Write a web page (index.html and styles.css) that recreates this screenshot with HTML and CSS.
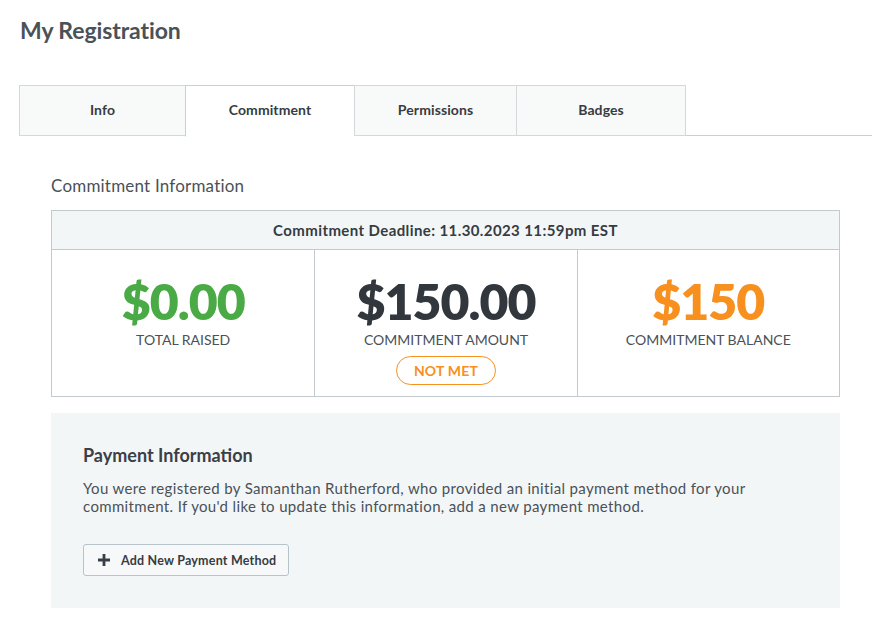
FILE: index.html
```html
<!DOCTYPE html>
<html lang="en">
<head>
<meta charset="utf-8">
<title>My Registration</title>
<link rel="stylesheet" href="styles.css">
</head>
<body>
<main class="page">
  <h1 class="title">My Registration</h1>
  <nav class="tabs">
    <div class="tab tab-info">Info</div>
    <div class="tab tab-commitment active">Commitment</div>
    <div class="tab tab-permissions">Permissions</div>
    <div class="tab tab-badges">Badges</div>
  </nav>
  <section class="content">
    <h2 class="section-title">Commitment Information</h2>
    <div class="summary">
      <div class="summary-head">Commitment Deadline: 11.30.2023 11:59pm EST</div>
      <div class="summary-cols">
        <div class="stat">
          <div class="amount green">$0.00</div>
          <div class="label">TOTAL RAISED</div>
        </div>
        <div class="stat">
          <div class="amount dark">$150.00</div>
          <div class="label">COMMITMENT AMOUNT</div>
          <span class="badge">NOT MET</span>
        </div>
        <div class="stat">
          <div class="amount orange">$150</div>
          <div class="label">COMMITMENT BALANCE</div>
        </div>
      </div>
    </div>
    <div class="payment">
      <h3 class="payment-title">Payment Information</h3>
      <p class="payment-text">You were registered by Samanthan Rutherford, who provided an initial payment method for your commitment. If you'd like to update this information, add a new payment method.</p>
      <button class="add-btn" type="button">
        <svg class="plus" width="12" height="12" viewBox="0 0 12 12" aria-hidden="true"><path d="M4.6 0h2.8v4.6H12v2.8H7.4V12H4.6V7.4H0V4.6h4.6z" fill="#3a4047"/></svg>
        <span class="btn-label">Add New Payment Method</span>
      </button>
    </div>
  </section>
</main>
</body>
</html>
```

FILE: styles.css
```css
* { box-sizing: border-box; }

html, body {
  margin: 0;
  padding: 0;
  background: #ffffff;
}

body {
  font-family: Lato, "Open Sans", "Liberation Sans", sans-serif;
  color: #474e55;
}

.page {
  width: 880px;
  padding: 16px 8px 0 19px;
}

.title {
  margin: 0 0 0 1px;
  font-size: 23px;
  line-height: 29px;
  font-weight: 700;
  letter-spacing: -0.1px;
  color: #4a5258;
}

.tabs {
  display: flex;
  margin-top: 40px;
  height: 51px;
  border-bottom: 1px solid #c9cfd4;
}

.tab {
  height: 51px;
  display: flex;
  align-items: center;
  justify-content: center;
  padding-bottom: 2px;
  background: #f8f9f9;
  border: 1px solid #d3d8dc;
  border-right: none;
  font-size: 14px;
  font-weight: 700;
  letter-spacing: 0.1px;
  color: #363c42;
}

.tab-info { width: 166px; }
.tab-commitment { width: 169px; }
.tab-permissions { width: 162px; }
.tab-badges { width: 170px; border-right: 1px solid #d3d8dc; }

.tab.active {
  background: #ffffff;
  border-color: #c9cfd4;
  border-bottom: 1px solid #ffffff;
  margin-bottom: -1px;
  height: 52px;
  padding-bottom: 3px;
}

.content {
  padding: 0 32px;
}

.section-title {
  margin: 40px 0 0;
  font-size: 17px;
  line-height: 20px;
  font-weight: 400;
  letter-spacing: 0.2px;
  color: #4a5157;
}

.summary {
  margin-top: 14px;
  border: 1px solid #c3cacf;
}

.summary-head {
  height: 39px;
  display: flex;
  align-items: center;
  justify-content: center;
  background: #f3f6f7;
  border-bottom: 1px solid #c3cacf;
  font-size: 15px;
  font-weight: 700;
  letter-spacing: 0.4px;
  color: #363c42;
}

.summary-cols {
  display: grid;
  grid-template-columns: 1fr 1fr 1fr;
  height: 146px;
}

.stat {
  display: flex;
  flex-direction: column;
  align-items: center;
  padding-top: 29px;
}

.stat + .stat {
  border-left: 1px solid #c3cacf;
}

.amount {
  font-size: 50px;
  line-height: 44px;
  font-weight: 800;
  letter-spacing: -1px;
}

.green { color: #4aab46; }
.dark { color: #31373d; }
.orange { color: #f7901e; }

.label {
  margin-top: 8px;
  font-size: 14px;
  line-height: 17px;
  color: #4a5157;
}

.badge {
  margin-top: 8px;
  width: 100px;
  height: 29px;
  display: flex;
  align-items: center;
  justify-content: center;
  border: 1px solid #f7901e;
  border-radius: 15px;
  font-size: 14px;
  font-weight: 700;
  letter-spacing: 0.2px;
  color: #f7901e;
}

.payment {
  margin-top: 16px;
  background: #f3f6f7;
  padding: 31px 32px 32px;
}

.payment-title {
  margin: 0;
  font-size: 18px;
  line-height: 22px;
  font-weight: 700;
  color: #3a4046;
}

.payment-text {
  margin: 13px 0 0;
  font-size: 15px;
  line-height: 18px;
  letter-spacing: 0.35px;
  color: #4a5157;
}

.add-btn {
  margin-top: 29px;
  display: flex;
  align-items: center;
  gap: 11px;
  height: 32px;
  width: 206px;
  padding: 0 0 0 14px;
  background: #f6f8f9;
  border: 1px solid #b6c3cb;
  border-radius: 3px;
  font-family: inherit;
  font-size: 12.5px;
  font-weight: 700;
  letter-spacing: 0.2px;
  color: #363c42;
  white-space: nowrap;
  text-align: left;
}

.plus { flex: none; }

.btn-label { white-space: nowrap; }
```
